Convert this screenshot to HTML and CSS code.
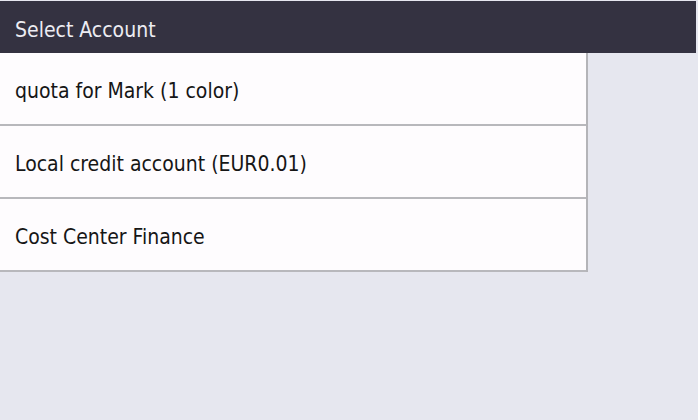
FILE: index.html
```html
<!DOCTYPE html>
<html>
<head>
<meta charset="utf-8">
<link rel="stylesheet" href="styles.css">
</head>
<body>
<div class="screen">
  <header class="titlebar">Select Account</header>
  <ul class="accounts">
    <li class="account">quota for Mark (1 color)</li>
    <li class="account">Local credit account (EUR0.01)</li>
    <li class="account">Cost Center Finance</li>
  </ul>
</div>
</body>
</html>
```
FILE: styles.css
```css
html, body {
  margin: 0;
  padding: 0;
  background: #e6e7ef;
}
.screen {
  width: 696px;
  height: 419px;
  padding-top: 1px;
  background: #e6e7ef;
  font-family: "DejaVu Sans Condensed", "DejaVu Sans", sans-serif;
}
.titlebar {
  height: 52px;
  background: #343241;
  color: #ececf2;
  font-size: 21px;
  line-height: 58px;
  padding-left: 15px;
  overflow: hidden;
}
.accounts {
  list-style: none;
  margin: 0;
  padding: 0;
  width: 586px;
  background: #fefcfe;
  border-right: 2px solid #b4b4b8;
}
.account {
  height: 70px;
  padding-top: 1px;
  border-bottom: 2px solid #b8b8bc;
  padding-left: 15px;
  font-size: 21px;
  line-height: 74px;
  color: #161616;
  overflow: hidden;
}
```
